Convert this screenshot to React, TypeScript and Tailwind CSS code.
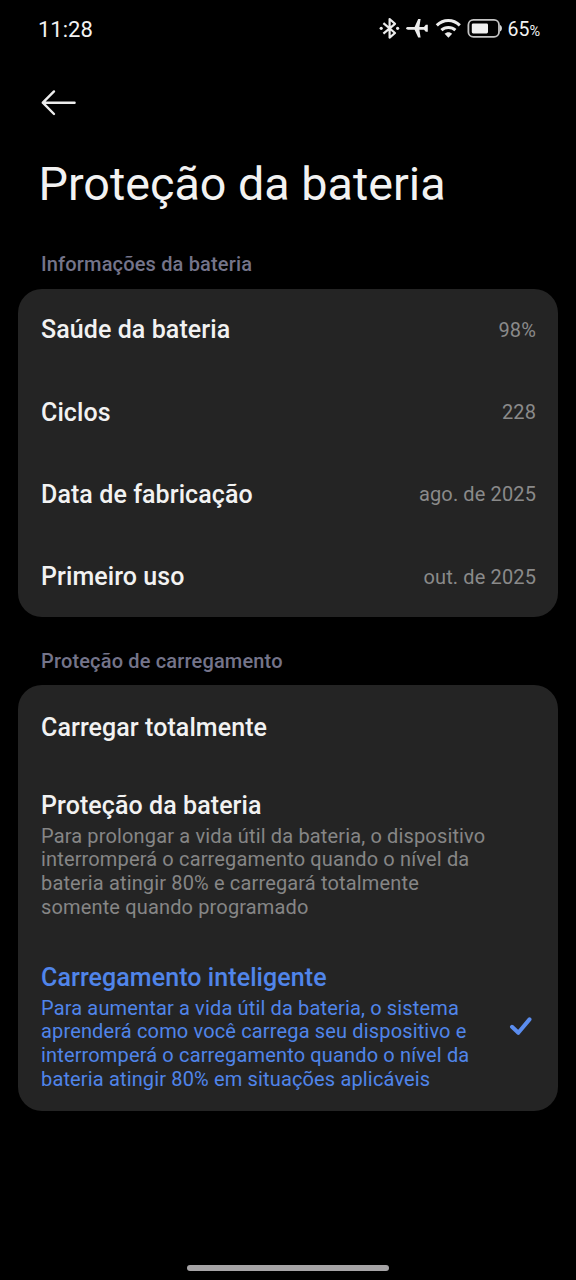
import clsx from "clsx";

const infoBateria = [
  { titulo: "Saúde da bateria", valor: "98%" },
  { titulo: "Ciclos", valor: "228" },
  { titulo: "Data de fabricação", valor: "ago. de 2025" },
  { titulo: "Primeiro uso", valor: "out. de 2025" },
];

const opcoes = [
  { titulo: "Carregar totalmente", linhas: [], ativa: false },
  {
    titulo: "Proteção da bateria",
    linhas: [
      "Para prolongar a vida útil da bateria, o dispositivo",
      "interromperá o carregamento quando o nível da",
      "bateria atingir 80% e carregará totalmente",
      "somente quando programado",
    ],
    ativa: false,
  },
  {
    titulo: "Carregamento inteligente",
    linhas: [
      "Para aumentar a vida útil da bateria, o sistema",
      "aprenderá como você carrega seu dispositivo e",
      "interromperá o carregamento quando o nível da",
      "bateria atingir 80% em situações aplicáveis",
    ],
    ativa: true,
  },
];

function StatusIcons() {
  return (
    <svg width="124" height="24" viewBox="0 0 124 24" fill="none">
      {/* Bluetooth */}
      <g stroke="#ececec" strokeWidth="2.2" strokeLinejoin="round">
        <path d="M4.4 6.2 L16 16 L10.6 20.6 V2 L16 6.8 L4.4 16.6" />
      </g>
      <circle cx="2.2" cy="11.3" r="1.6" fill="#ececec" />
      <circle cx="18.6" cy="11.3" r="1.6" fill="#ececec" />
      {/* Modo avião */}
      <path
        d="M27 11.3 C27 10.5 28 9.9 29 9.9 H35.6 L39.2 2 H41.6 L40.4 9.9 H45 L46.8 7.8 H48.8 V14.8 H46.8 L45 12.7 H40.4 L41.6 20.6 H39.2 L35.6 12.7 H29 C28 12.7 27 12.1 27 11.3 Z"
        fill="#ececec"
      />
      {/* Wi-Fi */}
      <g stroke="#ececec" strokeWidth="3">
        <path d="M57.8 8.4 C64.4 1.8 74.2 1.8 80.8 8.4" />
        <path d="M62.4 13.1 C66.2 9.5 72.6 9.5 76.4 13.1" />
      </g>
      <path d="M65.6 16.8 C67.6 14.6 71.2 14.6 73.2 16.8 L69.4 20.8 Z" fill="#ececec" />
      {/* Bateria */}
      <rect x="89.4" y="2.9" width="30.6" height="17" rx="5" stroke="#c4c4c4" strokeWidth="1.8" />
      <rect x="92.8" y="6.4" width="16.2" height="10" rx="1.4" fill="#f0f0f0" />
      <path d="M121 8 C123.6 9.2 123.6 13.4 121 14.6 Z" fill="#d4d4d4" />
    </svg>
  );
}

export default function App() {
  return (
    <main className="flex h-[1280px] w-[576px] flex-col overflow-hidden bg-black font-['Roboto',sans-serif] text-[#f2f2f2]">
      {/* BARRA DE STATUS */}
      <header className="flex h-[58px] items-center justify-between pr-9 pl-[38px]">
        <span className="text-[22px] font-[450]">11:28</span>
        <div className="flex items-center gap-1">
          <StatusIcons />
          <span className="pt-0.5 text-[19.5px] font-[450]">
            65<span className="text-[14.5px]">%</span>
          </span>
        </div>
      </header>

      {/* VOLTAR */}
      <button className="mt-[30px] ml-10 h-[30px] w-9" aria-label="Voltar">
        <svg width="36" height="30" viewBox="0 0 36 30" fill="none" stroke="#ededed" strokeWidth="2.4" strokeLinecap="round" strokeLinejoin="round">
          <path d="M34.6 14.7 H2.8 M14 3.4 L2.8 14.7 L14 26" />
        </svg>
      </button>

      <h1 className="mt-9 ml-[38.5px] text-[46.7px] leading-[60px]">Proteção da bateria</h1>

      {/* INFORMAÇÕES */}
      <h2 className="mt-[38px] ml-[41px] text-[20px] leading-6 font-medium tracking-[0.16px] text-[#74748a]">
        Informações da bateria
      </h2>
      <section className="mx-[18px] mt-[12.5px] h-[328px] rounded-[24px] bg-[#242424] pr-[22px] pl-[23px]">
        {infoBateria.map((item) => (
          <div key={item.titulo} className="flex h-[82.3px] items-center justify-between">
            <span className="pt-px text-[25px] font-medium tracking-[0.08px]">{item.titulo}</span>
            <span className="text-[20px] tracking-[0.12px] text-[#8a8a8a]">{item.valor}</span>
          </div>
        ))}
      </section>

      {/* CARREGAMENTO */}
      <h2 className="mt-8 ml-[41px] text-[20px] leading-6 font-medium tracking-[0.16px] text-[#74748a]">
        Proteção de carregamento
      </h2>
      <section className="mx-[18px] mt-[12.5px] h-[426px] rounded-[24px] bg-[#242424] pt-0.5 pr-[25px] pl-[23px]">
        {opcoes.map((opcao) => (
          <div
            key={opcao.titulo}
            className={clsx(
              "flex items-center justify-between",
              opcao.linhas.length ? "h-[172px]" : "h-[82px]",
              opcao.ativa && "text-[#5085ea]"
            )}
          >
            <div>
              <h3 className="text-[25px] leading-[30px] font-medium tracking-[0.08px]">{opcao.titulo}</h3>
              {opcao.linhas.length > 0 && (
                <p
                  className={clsx(
                    "mt-1 text-[20px] leading-[23.7px] tracking-[0.15px]",
                    !opcao.ativa && "text-[#868686]"
                  )}
                >
                  {opcao.linhas.map((linha) => (
                    <span key={linha} className="block whitespace-nowrap">
                      {linha}
                    </span>
                  ))}
                </p>
              )}
            </div>
            {opcao.ativa && (
              <svg width="24" height="20" viewBox="0 0 24 20" fill="none" stroke="#5b8def" strokeWidth="4" strokeLinecap="round" strokeLinejoin="round">
                <path d="M3 9.8 L9.3 15.8 L20.5 2.4" />
              </svg>
            )}
          </div>
        ))}
      </section>

      {/* BARRA DE GESTOS */}
      <div className="mt-auto mb-[9px] h-1.5 w-[202px] self-center rounded-full bg-[#a6a4a6]" />
    </main>
  );
}
